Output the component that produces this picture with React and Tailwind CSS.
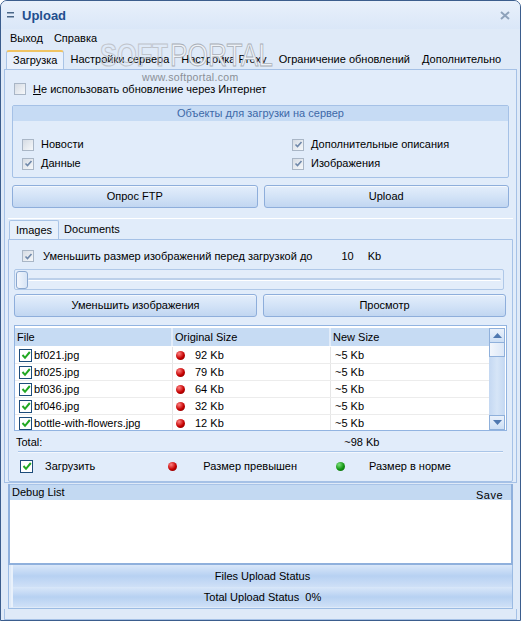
import React from "react";

const F = "font-['Liberation_Sans',Arial,sans-serif]";

function OCheck({ checked }) {
  return (
    <span className="w-[12px] h-[12px] border border-[#a9b6c6] bg-linear-to-br from-[#d6dce4] to-[#f6f8fa] flex items-center justify-center shrink-0">
      {checked && (
        <svg width="9" height="9" viewBox="0 0 9 9">
          <path d="M1.5 4.5 L3.5 6.5 L7.5 2" stroke="#6f88aa" strokeWidth="1.6" fill="none" />
        </svg>
      )}
    </span>
  );
}

function GCheck() {
  return (
    <span className="w-[13px] h-[13px] border border-[#1d4c7a] bg-white flex items-center justify-center shrink-0">
      <svg width="10" height="10" viewBox="0 0 10 10">
        <path d="M1.5 5 L4 7.8 L8.8 2" stroke="#22a822" strokeWidth="2" fill="none" />
      </svg>
    </span>
  );
}

function Dot({ green, className = "" }) {
  return (
    <span
      className={
        "block w-[9px] h-[9px] rounded-full shrink-0 " +
        (green
          ? "bg-[radial-gradient(circle_at_35%_30%,#7be07b,#119411_55%,#0a5a0a)] "
          : "bg-[radial-gradient(circle_at_35%_30%,#ff8080,#c40000_55%,#6e0000)] ") +
        className
      }
    />
  );
}

function Btn({ children, className = "" }) {
  return (
    <div
      className={
        "h-[23px] flex items-center justify-center border border-[#8eaedb] rounded-[3px] bg-linear-to-b from-[#e4eefb] via-[#d3e3f7] to-[#c1d6f1] shadow-[inset_0_1px_0_#f4f8fd] " +
        className
      }
    >
      {children}
    </div>
  );
}

const rows = [
  ["bf021.jpg", "92 Kb"],
  ["bf025.jpg", "79 Kb"],
  ["bf036.jpg", "64 Kb"],
  ["bf046.jpg", "32 Kb"],
  ["bottle-with-flowers.jpg", "12 Kb"],
];

export default function App() {
  return (
    <div className={`w-[521px] h-[621px] ${F} text-[11px] text-black leading-none`}>
      <div className="relative w-full h-full border border-[#3b5d8d] rounded-t-[7px] bg-[#dfeaf8] flex flex-col overflow-hidden">
        {/* Title bar */}
        <div className="h-[28px] shrink-0 flex items-center pl-[6px] pr-[10px] bg-linear-to-b from-[#e8f0fb] to-[#dae7f8]">
          <svg width="7" height="6" viewBox="0 0 7 6">
            <rect x="0" y="0" width="7" height="1.5" fill="#4a6788" />
            <rect x="0" y="4" width="7" height="1.5" fill="#4a6788" />
          </svg>
          <span className="ml-[8px] text-[13px] font-bold text-[#1f4e8e]">Upload</span>
          <div className="flex-1" />
          <svg width="10" height="9" viewBox="0 0 10 9">
            <path d="M1 1 L9 8 M9 1 L1 8" stroke="#8ea2bb" strokeWidth="2" />
          </svg>
        </div>

        {/* Menu */}
        <div className="h-[18px] shrink-0 flex items-center gap-[11px] pl-[9px]">
          <span>Выход</span>
          <span>Справка</span>
        </div>

        {/* Top tabs */}
        <div className="mt-[3px] h-[19px] shrink-0 flex items-end pl-[5px]">
          <div className="h-[19px] px-[6px] flex items-center border-x border-[#a9c4e6] border-t-2 border-t-[#f0c463] rounded-t-[3px] bg-[#e9f1fc]">
            Загрузка
          </div>
          <div className="h-[19px] px-[6px] flex items-center">Настройки сервера</div>
          <div className="h-[19px] px-[6px] flex items-center">Настройка Proxy</div>
          <div className="h-[19px] px-[6px] flex items-center">Ограничение обновлений</div>
          <div className="h-[19px] px-[6px] flex items-center">Дополнительно</div>
        </div>

        {/* Main tab panel */}
        <div className="mx-[3px] h-[414px] shrink-0 border border-[#a5c1e6] bg-[#e1ecfa] flex flex-col">
          <div className="px-[7px] flex flex-col">
            <div className="mt-[11px] h-[16px] flex items-center gap-[7px] pl-[2px]">
              <OCheck />
              <span>
                <span className="underline">Н</span>е использовать обновление через Интернет
              </span>
            </div>

            {/* Group box */}
            <div className="mt-[8px] h-[73px] border border-[#a5c1e6] rounded-[2px] flex flex-col">
              <div className="h-[15px] bg-[#c6dbf4] flex items-center justify-center text-[#3d69a8]">
                Объекты для загрузки на сервер
              </div>
              <div className="mt-[14px] grid grid-cols-[270px_1fr] pl-[9px]">
                <div className="h-[19px] flex items-center gap-[7px]">
                  <OCheck />
                  <span>Новости</span>
                </div>
                <div className="h-[19px] flex items-center gap-[7px]">
                  <OCheck checked />
                  <span>Дополнительные описания</span>
                </div>
                <div className="h-[19px] flex items-center gap-[7px]">
                  <OCheck checked />
                  <span>Данные</span>
                </div>
                <div className="h-[19px] flex items-center gap-[7px]">
                  <OCheck checked />
                  <span>Изображения</span>
                </div>
              </div>
            </div>

            {/* Buttons */}
            <div className="mt-[7px] grid grid-cols-2 gap-[6px]">
              <Btn>Опрос FTP</Btn>
              <Btn>Upload</Btn>
            </div>
          </div>

          {/* Inner tab control */}
          <div className="mt-[10px] mx-[3px] border-t border-white flex flex-col flex-1">
            <div className="mt-[1px] h-[19px] flex items-end pl-[1px]">
              <div className="h-[19px] px-[6px] flex items-center border-x border-t border-[#a9c4e6] rounded-t-[2px] bg-[#e7f0fb]">
                Images
              </div>
              <div className="h-[19px] px-[5px] flex items-center">Documents</div>
            </div>
            <div className="flex-1 border border-[#a5c1e6] rounded-b-[2px] bg-[#e1ecfa] px-[5px] flex flex-col">
              <div className="mt-[8px] h-[16px] flex items-center pl-[8px]">
                <OCheck checked />
                <span className="ml-[9px]">Уменьшить размер изображений перед загрузкой до</span>
                <span className="ml-[29px]">10</span>
                <span className="ml-[14px]">Kb</span>
              </div>

              {/* Slider */}
              <div className="mt-[5px] h-[21px] mr-[3px] border border-[#afc8e8] rounded-[2px] bg-[#e3edfa] flex items-center pl-[1px] pr-[2px]">
                <div className="w-[12px] h-[18px] rounded-[3px] border border-[#8ba8cf] bg-linear-to-r from-[#f2f6fc] to-[#d7e4f5] shrink-0" />
                <div className="flex-1 h-[3px] rounded-full bg-[#bcd0ea] border-b border-white" />
              </div>

              {/* Buttons */}
              <div className="mt-[4px] grid grid-cols-2 gap-[6px] pr-[1px]">
                <Btn>Уменьшить изображения</Btn>
                <Btn>Просмотр</Btn>
              </div>

              {/* List */}
              <div className="mt-[8px] h-[106px] border border-[#92b4e1] bg-white pt-[2px] pr-[1px] flex overflow-hidden">
                <div className="flex-1 flex flex-col overflow-hidden">
                  <div className="h-[18px] shrink-0 grid grid-cols-[158px_158px_1fr] bg-[#c6dbf3]">
                    <div className="flex items-center pl-[2px] border-r-2 border-[#e2ecf9]">File</div>
                    <div className="flex items-center pl-[2px] border-r-2 border-[#e2ecf9]">Original Size</div>
                    <div className="flex items-center pl-[2px]">New Size</div>
                  </div>
                  <div className="h-[1px] shrink-0" />
                  {rows.map(([n, s]) => (
                    <div key={n} className="h-[17px] shrink-0 grid grid-cols-[158px_158px_1fr] border-b border-[#ececec]">
                      <div className="flex items-center pl-[4px] gap-[2px] border-r border-[#e6e6e6]">
                        <GCheck />
                        <span>{n}</span>
                      </div>
                      <div className="flex items-center pl-[3px] border-r border-[#e6e6e6]">
                        <Dot />
                        <span className="ml-[10px]">{s}</span>
                      </div>
                      <div className="flex items-center pl-[4px]">~5 Kb</div>
                    </div>
                  ))}
                </div>
                {/* Scrollbar */}
                <div className="w-[16px] shrink-0 flex flex-col bg-linear-to-r from-[#c4d8f2] via-[#d6e5f7] to-[#c4d8f2]">
                  <div className="h-[15px] border border-[#8fb0db] bg-linear-to-b from-[#eaf1fb] to-[#cddff5] flex items-center justify-center">
                    <svg width="9" height="5" viewBox="0 0 9 5">
                      <path d="M0 5 L4.5 0 L9 5 Z" fill="#4f78b0" />
                    </svg>
                  </div>
                  <div className="h-[14px] border-x border-b border-[#8fb0db] bg-linear-to-r from-[#f2f6fc] to-[#dbe7f7]" />
                  <div className="flex-1" />
                  <div className="h-[15px] border border-[#8fb0db] bg-linear-to-b from-[#eaf1fb] to-[#cddff5] flex items-center justify-center">
                    <svg width="9" height="5" viewBox="0 0 9 5">
                      <path d="M0 0 L4.5 5 L9 0 Z" fill="#4f78b0" />
                    </svg>
                  </div>
                </div>
              </div>

              {/* Total */}
              <div className="mt-[4px] h-[14px] flex items-center pl-[2px]">
                <span>Total:</span>
                <span className="ml-[302px]">~98 Kb</span>
              </div>
              <div className="mt-[2px] mx-[4px] h-[2px] bg-[#a9c5e8] border-b border-[#f3f7fd]" />

              {/* Legend */}
              <div className="mt-[6px] h-[14px] flex items-center pl-[6px]">
                <GCheck />
                <span className="ml-[12px]">Загрузить</span>
                <Dot className="ml-[73px]" />
                <span className="ml-[26px]">Размер превышен</span>
                <Dot green className="ml-[39px]" />
                <span className="ml-[24px]">Размер в норме</span>
              </div>
            </div>
          </div>
        </div>

        {/* Debug list */}
        <div className="mt-[1px] mx-[7px] h-[81px] shrink-0 border-x-2 border-b-2 border-[#8fb0dc] flex flex-col">
          <div className="h-[16px] bg-[#c3d9f2] flex items-start justify-between pl-[2px] pr-[8px] border-t border-[#a9c4e8]">
            <span className="mt-[2px]">Debug List</span>
            <span className="mt-[5px] tracking-[0.5px]">Save</span>
          </div>
          <div className="flex-1 bg-white" />
        </div>

        {/* Status bars */}
        <div className="mx-[7px] h-[44px] shrink-0 border-x border-b border-[#9bbbe3] flex flex-col pl-[2px]">
          <div className="h-[22px] flex items-center justify-center border-l-2 border-[#e9f1fb] bg-linear-to-b from-[#d9e7f9] via-[#b7d1f2] to-[#cfe0f7]">
            Files Upload Status
          </div>
          <div className="h-[20px] flex items-center justify-center border-l-2 border-[#e9f1fb] bg-linear-to-b from-[#d9e7f9] via-[#b7d1f2] to-[#cfe0f7]">
            Total Upload Status&nbsp;&nbsp;0%
          </div>
        </div>
        <div className="flex-1 mx-[3px] border-x border-b border-[#a5c1e6]" />

        {/* Watermark overlay */}
        <div className="absolute left-[99px] top-[39px] pointer-events-none">
          <span className="inline-block origin-left scale-x-[0.82] text-[31px] font-bold text-transparent [-webkit-text-stroke:1px_#bfc4cb] leading-none">SOFT</span>
        </div>
        <div className="absolute left-[169px] top-[39px] pointer-events-none">
          <span className="inline-block origin-left scale-x-[0.85] text-[31px] text-[#eef2f7] [-webkit-text-stroke:0.8px_#a8aeb6] leading-none">PORTAL</span>
        </div>
        <div className="absolute left-[141px] top-[71px] text-[10.5px] text-[#8a8f96] tracking-[0.3px] pointer-events-none">
          www.softportal.com
        </div>
      </div>
    </div>
  );
}
